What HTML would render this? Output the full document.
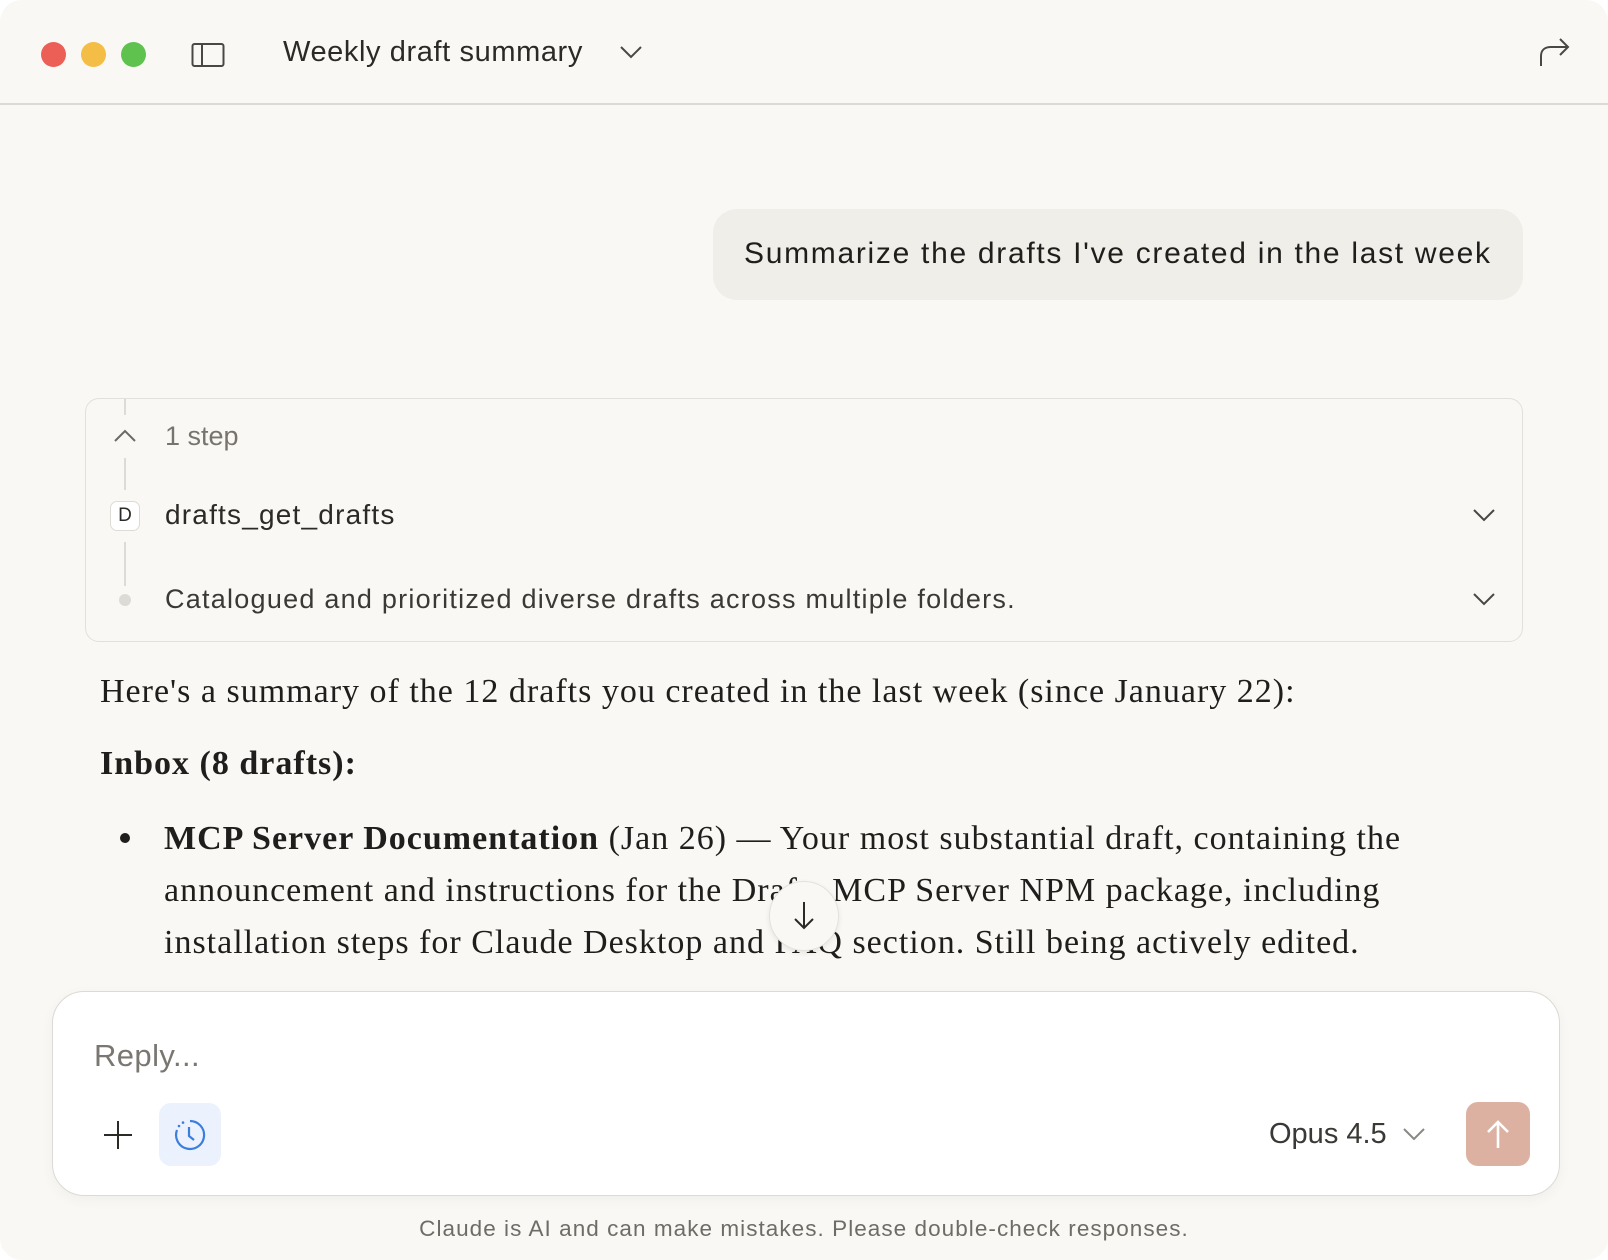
<!DOCTYPE html>
<html><head><meta charset="utf-8"><style>
*{margin:0;padding:0;box-sizing:border-box}
html,body{width:1608px;height:1260px;overflow:hidden;background:#fff}
.win{position:absolute;left:0;top:0;width:1608px;height:1260px;background:#f9f8f5;border-radius:22px;overflow:hidden;font-family:"Liberation Sans",sans-serif;color:#2b2a27}
.hdr{position:absolute;left:0;top:0;width:1608px;height:105px;border-bottom:2px solid #dcdad4}
.tl{position:absolute;top:42px;width:25px;height:25px;border-radius:50%}
.abs{position:absolute;white-space:nowrap}
.serif{font-family:"Liberation Serif",serif;color:#1f1e1c;font-size:34px;letter-spacing:1px}
</style></head><body><div class="win">
<div class="hdr">
<div class="tl" style="left:41px;background:#ec5f56"></div>
<div class="tl" style="left:81px;background:#f4bd45"></div>
<div class="tl" style="left:121px;background:#5fc24f"></div>
<svg class="abs" style="left:191px;top:41px" width="34" height="28" viewBox="0 0 34 28"><rect x="1.5" y="3" width="31" height="22" rx="2" fill="none" stroke="#4a4844" stroke-width="2"/><line x1="11" y1="3" x2="11" y2="25" stroke="#4a4844" stroke-width="2"/></svg>
<div class="abs" style="left:283px;top:36px;font-size:29px;letter-spacing:0.6px;color:#2b2a27">Weekly draft summary</div>
<svg class="abs" style="left:619px;top:44px" width="24" height="16" viewBox="0 0 24 16"><path d="M2 3l10 10 10-10" fill="none" stroke="#4a4844" stroke-width="2"/></svg>
<svg class="abs" style="left:1538px;top:36px" width="34" height="32" viewBox="0 0 34 32"><path d="M3 30V20c0-6 4-9 10-9h17M22 3l8 8-8 8" fill="none" stroke="#4a4844" stroke-width="2"/></svg>
</div>
<div class="abs" style="left:713px;top:209px;width:810px;height:91px;background:#f0eee8;border-radius:24px"></div>
<div class="abs" style="left:744px;top:237px;font-size:30px;letter-spacing:1.7px;color:#1f1e1c">Summarize the drafts I've created in the last week</div>

<div class="abs" style="left:85px;top:398px;width:1438px;height:244px;border:1.5px solid #e2e0da;border-radius:14px"></div>
<div class="abs" style="left:124px;top:399px;width:2px;height:16px;background:#dddbd5"></div>
<div class="abs" style="left:124px;top:458px;width:2px;height:32px;background:#dddbd5"></div>
<div class="abs" style="left:124px;top:542px;width:2px;height:44px;background:#dddbd5"></div>
<svg class="abs" style="left:113px;top:428px" width="24" height="16" viewBox="0 0 24 16"><path d="M2 13L12 3l10 10" fill="none" stroke="#6b6964" stroke-width="2"/></svg>
<div class="abs" style="left:165px;top:421px;font-size:27px;color:#77746e">1 step</div>
<div class="abs" style="left:110px;top:501px;width:30px;height:30px;border:1.5px solid #dddbd5;border-radius:7px;background:#fff;font-size:19px;text-align:center;line-height:27px;color:#2b2a27">D</div>
<div class="abs" style="left:165px;top:499px;font-size:28px;letter-spacing:1.2px;color:#2b2a27">drafts_get_drafts</div>
<div class="abs" style="left:119px;top:594px;width:12px;height:12px;border-radius:50%;background:#dddbd5"></div>
<div class="abs" style="left:165px;top:584px;font-size:27px;letter-spacing:1.25px;color:#3a3935">Catalogued and prioritized diverse drafts across multiple folders.</div>
<svg class="abs" style="left:1472px;top:507px" width="24" height="16" viewBox="0 0 24 16"><path d="M2 3l10 10 10-10" fill="none" stroke="#4a4844" stroke-width="2"/></svg>
<svg class="abs" style="left:1472px;top:591px" width="24" height="16" viewBox="0 0 24 16"><path d="M2 3l10 10 10-10" fill="none" stroke="#4a4844" stroke-width="2"/></svg>

<div class="abs serif" style="left:100px;top:673px">Here's a summary of the 12 drafts you created in the last week (since January 22):</div>
<div class="abs serif" style="left:100px;top:745px;font-weight:bold">Inbox (8 drafts):</div>
<div class="abs" style="left:120px;top:833px;width:10px;height:10px;border-radius:50%;background:#1f1e1c"></div>
<div class="abs serif" style="left:164px;top:813px;line-height:52px"><b>MCP Server Documentation</b> (Jan 26) — Your most substantial draft, containing the<br>announcement and instructions for the Drafts MCP Server NPM package, including<br>installation steps for Claude Desktop and FAQ section. Still being actively edited.</div>
<div class="abs serif" style="left:164px;top:987px"><b>Weekly Review</b> (Jan 27) — A checklist-style draft with tasks and notes for the week</div>

<div class="abs" style="left:769px;top:881px;width:70px;height:70px;border-radius:50%;background:#f9f8f5;border:1px solid #e4e2dc;box-shadow:0 2px 6px rgba(0,0,0,.08)"></div>
<svg class="abs" style="left:792px;top:900px" width="24" height="32" viewBox="0 0 24 32"><path d="M12 2v26M3 19l9 9 9-9" fill="none" stroke="#2b2a27" stroke-width="2"/></svg>

<div class="abs" style="left:52px;top:991px;width:1508px;height:205px;background:#fff;border:1.5px solid #dcdad4;border-radius:32px;box-shadow:0 4px 14px rgba(0,0,0,.04)"></div>
<div class="abs" style="left:94px;top:1038px;font-size:31px;letter-spacing:0.4px;color:#7a7771">Reply...</div>
<svg class="abs" style="left:102px;top:1119px" width="32" height="32" viewBox="0 0 32 32"><path d="M16 2v28M2 16h28" stroke="#2b2a27" stroke-width="2"/></svg>
<div class="abs" style="left:159px;top:1103px;width:62px;height:63px;border-radius:12px;background:#ebf2fd"></div>
<svg class="abs" style="left:172px;top:1117px" width="36" height="36" viewBox="0 0 36 36"><path d="M18 4a14 14 0 1 1-13 9" fill="none" stroke="#3b7ede" stroke-width="2.2"/><circle cx="7" cy="9" r="1.3" fill="#3b7ede"/><circle cx="11" cy="5.6" r="1.3" fill="#3b7ede"/><path d="M17 10v9l5 4" fill="none" stroke="#3b7ede" stroke-width="2.2"/></svg>
<div class="abs" style="left:1269px;top:1118px;font-size:29px;color:#3a3935">Opus 4.5</div>
<svg class="abs" style="left:1402px;top:1126px" width="24" height="16" viewBox="0 0 24 16"><path d="M2 3l10 10 10-10" fill="none" stroke="#8a8883" stroke-width="2"/></svg>
<div class="abs" style="left:1466px;top:1102px;width:64px;height:64px;border-radius:12px;background:#dcb1a1"></div>
<svg class="abs" style="left:1484px;top:1118px" width="28" height="32" viewBox="0 0 28 32"><path d="M14 30V4M4 14L14 4l10 10" fill="none" stroke="#fff" stroke-width="2.6"/></svg>
<div class="abs" style="left:0;width:1608px;top:1216px;text-align:center;font-size:22.5px;letter-spacing:1.05px;color:#6f6c66">Claude is AI and can make mistakes. Please double-check responses.</div>
</div></body></html>
